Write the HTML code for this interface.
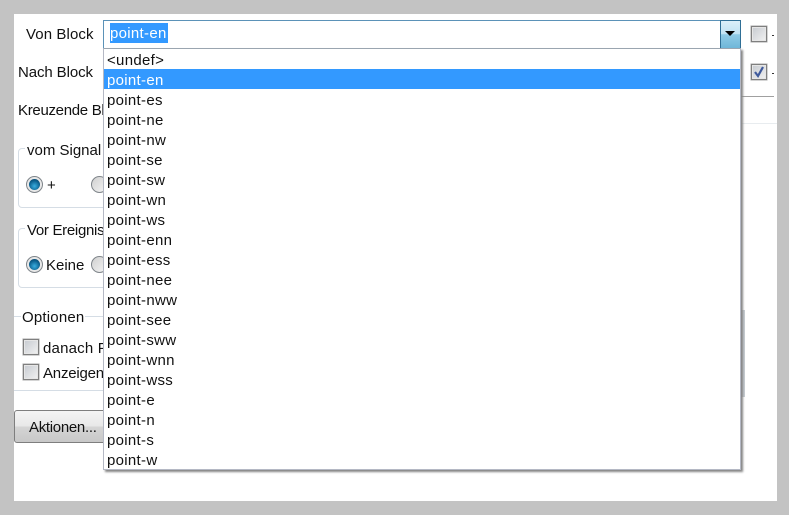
<!DOCTYPE html>
<html><head><meta charset="utf-8"><style>
html,body{margin:0;padding:0}
body{width:789px;height:515px;background:#c3c3c3;position:relative;overflow:hidden;font-family:"Liberation Sans",sans-serif;font-size:15px;color:#111;letter-spacing:.2px}
div{position:absolute;box-sizing:border-box}
.t{white-space:nowrap;line-height:20px;height:20px}
.win{left:14px;top:14px;width:763px;height:487px;background:#fff}
.cb{width:16px;height:16px;border:1px solid #7f7f7f;background:linear-gradient(135deg,#c6cad0,#f2f2f2);box-shadow:inset 0 0 0 1px #e6e6e6,0 0 0 .5px #a8a8a8}
.rb{width:17px;height:17px;border-radius:50%;border:1px solid #7f858a;background:linear-gradient(135deg,#d0d0d0,#f5f5f5)}
.rb.on{background:#e8e8e8}
.rb.on:after{content:"";position:absolute;left:2px;top:2px;width:11px;height:11px;border-radius:50%;background:radial-gradient(circle at 50% 65%,#39aee0,#0b5f8e 60%,#083a5a)}
.gb{border:1px solid #d5dde5;border-radius:4px}
.list{left:103px;top:48px;width:638px;height:422px;background:#fff;border:1px solid #b4b8c4;border-top:1px solid #9aa5b0;box-shadow:2px 2px 2px #858585}
.list div{left:0;width:636px;height:20px;line-height:24px;padding-left:3px;white-space:nowrap;letter-spacing:.3px}
</style></head><body>
<div class="win"></div>
<div class="t" style="left:26px;top:25px;letter-spacing:.1px">Von Block</div>
<div class="t" style="left:18px;top:63px;letter-spacing:-.1px">Nach Block</div>
<div class="t" style="left:18px;top:101px;letter-spacing:-.3px">Kreuzende Bl</div>
<div style="left:103px;top:20px;width:638px;height:29px;background:#fff;border:1px solid #5b92b8;border-bottom-color:#8fa9bb"></div>
<div class="t" style="left:110px;top:23px;width:58px;background:#3399ff;color:#fff;line-height:22px;letter-spacing:.3px">point-en</div>
<div style="left:720px;top:20px;width:21px;height:29px;border:1px solid #2f6f96;background:linear-gradient(#dcf0f9 0,#c0e3f3 48%,#8fcbe6 50%,#6fb7d9 100%)"></div>
<svg style="position:absolute;left:725px;top:31px" width="11" height="6"><path d="M0 0h10l-5 5z" fill="#000"/></svg>
<div class="cb" style="left:751px;top:26px"></div>
<div class="cb" style="left:751px;top:64px"></div>
<svg style="position:absolute;left:752px;top:65px" width="14" height="14"><path d="M3 7l3 4 5-9" fill="none" stroke="#3f5a9c" stroke-width="2.2"/></svg>
<div style="left:772px;top:35px;width:2px;height:1px;background:#333"></div>
<div style="left:772px;top:73px;width:2px;height:1px;background:#333"></div>
<div style="left:741px;top:96px;width:33px;height:1px;background:#a0a0a0"></div>
<div style="left:741px;top:123px;width:36px;height:1px;background:#e8ecef"></div>
<div class="gb" style="left:18px;top:148px;width:90px;height:60px"></div>
<div class="t" style="left:25px;top:141px;background:#fff;padding:0 2px;width:78px;overflow:hidden;letter-spacing:0">vom Signal</div>
<div class="rb on" style="left:26px;top:176px"></div>
<div class="t" style="left:47px;top:176px">+</div>
<div class="rb" style="left:91px;top:176px"></div>
<div class="gb" style="left:18px;top:228px;width:90px;height:60px"></div>
<div class="t" style="left:25px;top:221px;background:#fff;padding:0 2px;width:78px;overflow:hidden;letter-spacing:-.3px">Vor Ereignis</div>
<div class="rb on" style="left:26px;top:256px"></div>
<div class="t" style="left:46px;top:256px;letter-spacing:0">Keine</div>
<div class="rb" style="left:91px;top:256px"></div>
<div style="left:14px;top:316px;width:90px;height:1px;background:#d5dde5"></div>
<div style="left:14px;top:390px;width:90px;height:1px;background:#d5dde5"></div>
<div style="left:741px;top:310px;width:4px;height:87px;background:#c8ced4"></div>
<div class="t" style="left:21px;top:308px;background:#fff;padding:0 1px">Optionen</div>
<div class="cb" style="left:23px;top:339px"></div>
<div class="t" style="left:43px;top:339px">danach P</div>
<div class="cb" style="left:23px;top:364px"></div>
<div class="t" style="left:43px;top:364px;letter-spacing:-.2px">Anzeigen</div>
<div style="left:14px;top:410px;width:92px;height:33px;border:1px solid #7e7e7e;border-radius:3px;background:linear-gradient(#f4f4f4,#e8e8e8 48%,#d4d4d4 52%,#c8c8c8)"></div>
<div class="t" style="left:29px;top:418px;letter-spacing:-.3px">Aktionen...</div>
<div class="list">
<div style="top:0">&lt;undef&gt;</div>
<div style="top:20px;background:#3399ff;color:#fff">point-en</div>
<div style="top:40px">point-es</div>
<div style="top:60px">point-ne</div>
<div style="top:80px">point-nw</div>
<div style="top:100px">point-se</div>
<div style="top:120px">point-sw</div>
<div style="top:140px">point-wn</div>
<div style="top:160px">point-ws</div>
<div style="top:180px">point-enn</div>
<div style="top:200px">point-ess</div>
<div style="top:220px">point-nee</div>
<div style="top:240px">point-nww</div>
<div style="top:260px">point-see</div>
<div style="top:280px">point-sww</div>
<div style="top:300px">point-wnn</div>
<div style="top:320px">point-wss</div>
<div style="top:340px">point-e</div>
<div style="top:360px">point-n</div>
<div style="top:380px">point-s</div>
<div style="top:400px">point-w</div>
</div>
</body></html>
